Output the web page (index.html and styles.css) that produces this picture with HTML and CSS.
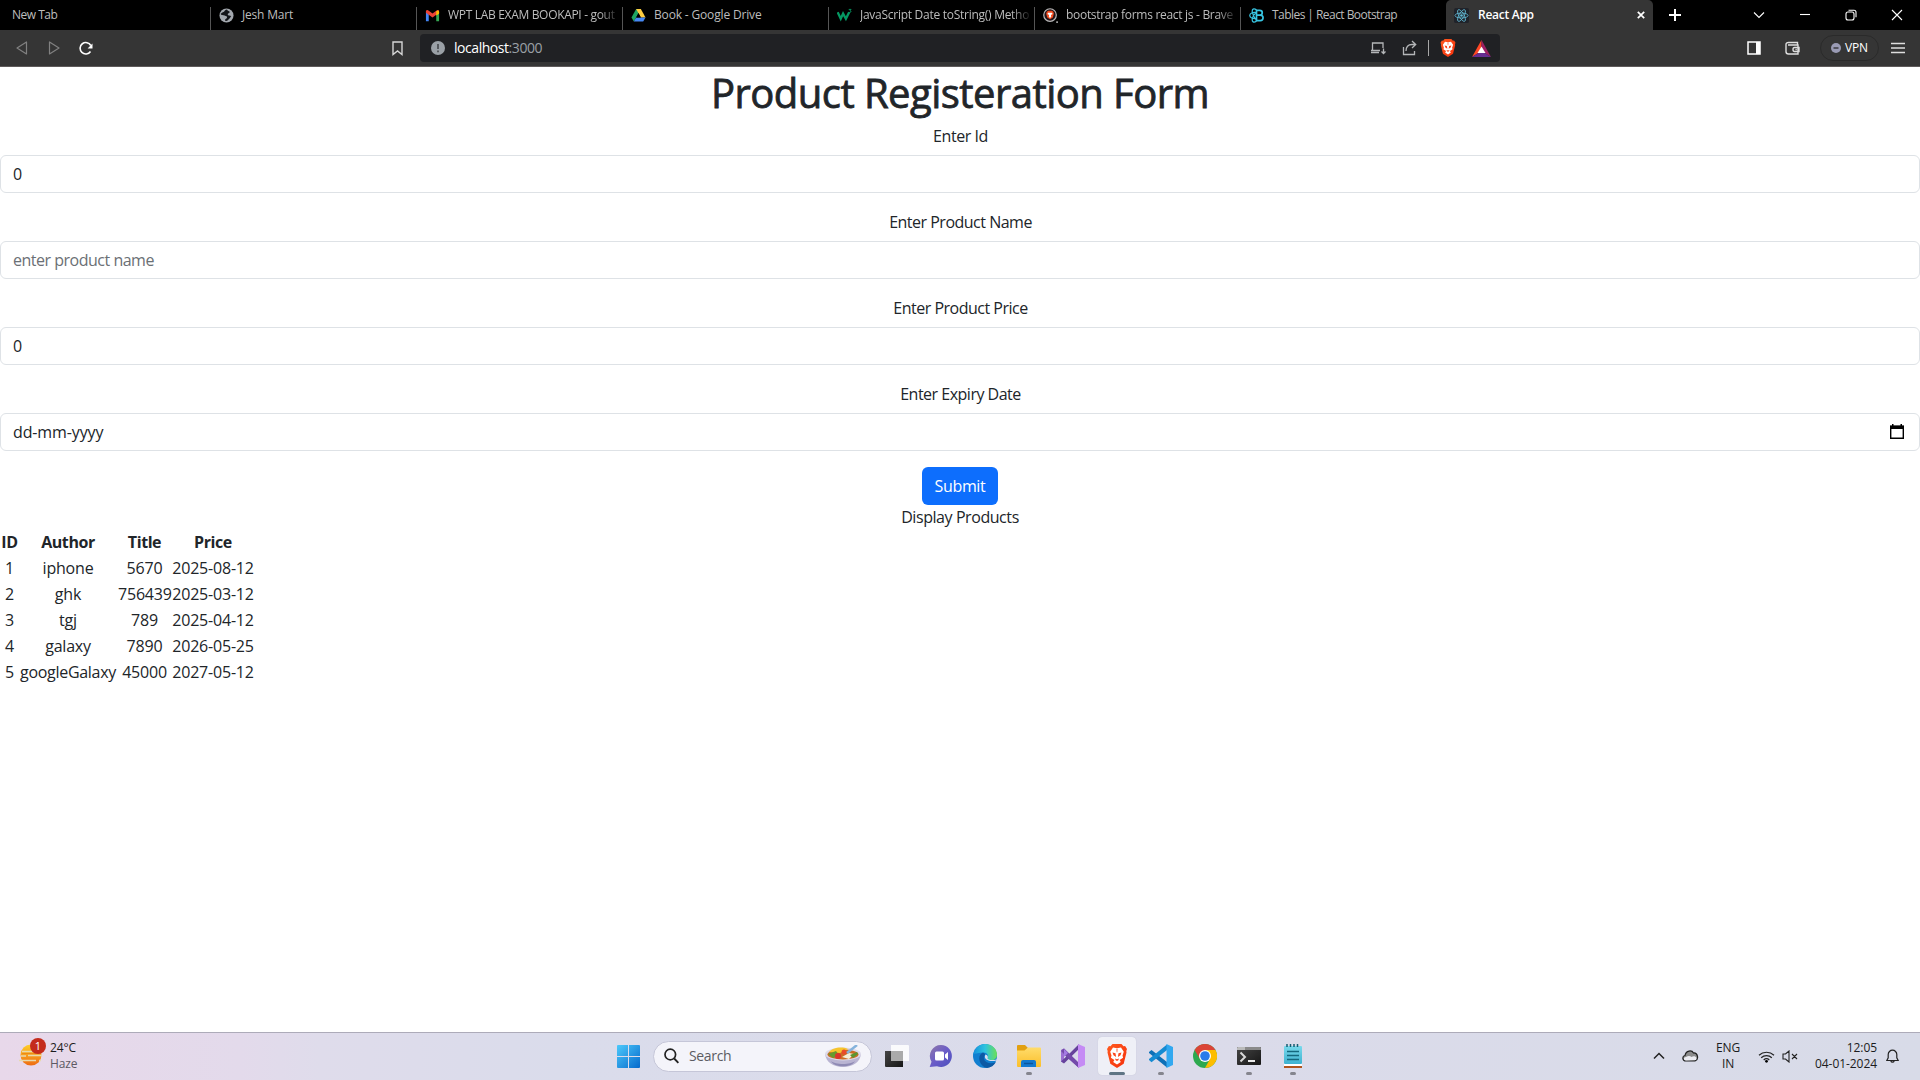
FILE: index.html
```html
<!DOCTYPE html>
<html lang="en">
<head>
<meta charset="utf-8">
<title>React App</title>
<link rel="stylesheet" href="styles.css">
</head>
<body>
<svg class="defs" width="0" height="0">
  <defs>
    <linearGradient id="lion" x1="0" x2="1" y1="0" y2="1"><stop offset="0" stop-color="#ff5a1f"/><stop offset="1" stop-color="#f5300c"/></linearGradient>
    <linearGradient id="win" x1="0" x2="1" y1="0" y2="1"><stop offset="0" stop-color="#4cc9fb"/><stop offset="1" stop-color="#0669cc"/></linearGradient>
    <linearGradient id="sun" x1="0" x2="0" y1="0" y2="1"><stop offset="0" stop-color="#ffcf2a"/><stop offset="1" stop-color="#ee6b12"/></linearGradient>
    <linearGradient id="chat" x1="0" x2="1" y1="0" y2="1"><stop offset="0" stop-color="#9079a8"/><stop offset=".5" stop-color="#6a5cc8"/><stop offset="1" stop-color="#4a4fbe"/></linearGradient>
    <linearGradient id="edgeTop" x1="0" x2="1"><stop offset="0" stop-color="#1592dc"/><stop offset=".5" stop-color="#2fc3df"/><stop offset="1" stop-color="#6be055"/></linearGradient>
    <linearGradient id="folder" x1="0" x2="0" y1="0" y2="1"><stop offset="0" stop-color="#ffdc6b"/><stop offset="1" stop-color="#fbbf2b"/></linearGradient>
    <linearGradient id="note" x1="0" x2="0" y1="0" y2="1"><stop offset="0" stop-color="#79d9ec"/><stop offset="1" stop-color="#3eb2d0"/></linearGradient>
    <linearGradient id="dark" x1="0" x2="1" y1="0" y2="1"><stop offset="0" stop-color="#454545"/><stop offset="1" stop-color="#161616"/></linearGradient>
    <symbol id="brave" viewBox="0 0 20 24">
      <path fill="url(#lion)" d="M5.500 0h9l2 2.200 1.600-.2L20 5l-.7 2 .2 1.500-2.800 11.200L10 24l-6.700-4.300L.5 8.500.7 7 0 5l1.900-3 1.600.2z"/>
      <path fill="#fff" d="M6 3.500l4 .8 4-.8 2.800 4.200-1.300 3.800.6 2.200-3.500 2.300 1.200 2L10 20.500 6.200 18l1.200-2-3.500-2.300.6-2.200L3.200 7.700z"/>
      <path fill="#fb4418" d="M5.500 8.500l3 .8.600 3.600-2.600-1.700zm9 0l-3 .8-.6 3.600 2.600-1.700zM9.500 4.800h1l-.2 3.500h-.6zM8 14.500l2 .8 2-.8-.7 1.700-1.300.8-1.300-.8z"/>
    </symbol>
  </defs>
</svg>

<div class="screen">
  <header class="browser">
    <div class="tabs">
      <div class="tab first"><span class="tab-title t-new">New Tab</span></div>
      <div class="tab">
        <svg class="fav" viewBox="0 0 16 16"><circle cx="8" cy="8" r="7.500" fill="#a3a8ae"/><path d="M8.500 1.500c-3 .3-2 2.500-4.500 3L1.800 6c.2 1.800 2.700 1.400 4.200 2.100 1.500.8 3 .6 2.500 2.300-.6 1.400-2.300 1-2 3.300 2.500.8 3.500-1.400 5-2.700l1.500-2.400c-1.300-1-3.500-.2-3.700-1.800-.2-1.300 2-1.200 2.200-2.600.1-1-2.500-1-3-2.700z" fill="#14161a"/></svg>
        <span class="tab-title t-jesh">Jesh Mart</span>
      </div>
      <div class="tab">
        <svg class="fav" viewBox="0 0 16 16"><path fill="#4285f4" d="M1 14V4l3 2v8z"/><path fill="#34a853" d="M15 14V4l-3 2v8z"/><path fill="#ea4335" d="M1 5V3c1-1.500 2-1 3-.2l4 3 4-3c1-.8 2-1.300 3 .2v2L8 10z"/><path fill="#fbbc04" d="M12 3.500c2-1.500 3-1 3 1V6l-3 2z"/></svg>
        <span class="tab-title fade t-wpt">WPT LAB EXAM BOOKAPI - gout</span>
      </div>
      <div class="tab">
        <svg class="fav" viewBox="0 0 16 16"><path fill="#1fa463" d="M5.500 1h5L3 14.500.5 10z"/><path fill="#ffcd40" d="M5.500 1h5l5 9h-5z"/><path fill="#4688f4" d="M3 14.500L5.500 10h10L13 14.500z"/><path d="M8 5.300L10.500 10h-5z"/></svg>
        <span class="tab-title t-book">Book - Google Drive</span>
      </div>
      <div class="tab">
        <svg class="fav" viewBox="0 0 16 16"><path fill="none" stroke="#059862" stroke-width="2.500" d="M.7 4.500L4 11.500 6.500 6l3 5.500L13 4.500"/><path fill="none" stroke="#059862" d="M12.500 1.500H15L13.800 3c1.500 0 1.500 2-.9 1.800"/></svg>
        <span class="tab-title fade">JavaScript Date toString() Metho</span>
      </div>
      <div class="tab">
        <svg class="fav" viewBox="0 0 16 16"><circle cx="7.500" cy="7.500" r="6.700" fill="#22151a" stroke="#b8b8b8" stroke-width="1.300"/><path fill="#f44a1d" d="M4 4l1.500-1h4L11 4l.6 2-1.100 4-3 2-3-2-1.100-4z"/><path fill="#fff" d="M5.500 5h4l.8 1.500-1.800 1 .3 2-1.300 1-1.300-1 .3-2-1.800-1z"/><circle cx="15" cy="15" r="1" fill="#ccc"/></svg>
        <span class="tab-title fade t-forms">bootstrap forms react js - Brave</span>
      </div>
      <div class="tab last">
        <svg class="fav" viewBox="0 0 16 16" fill="none" stroke="#38c5e2"><path stroke-width="1.800" d="M8 2.500h3.500c3.500 0 3.500 5 0 5H8zm0 5h4c4 0 4 6 0 6H8z"/><path stroke-width="1.300" d="M8 5C4 4 .8 6 .8 8S4 12 8 11M8 2C5 0 3 1 3.500 4.500c.5 3 2 6 4.500 8.500M8 14c-3 2-5 1-4.500-2.500C4 9 6 6 8 4.500"/></svg>
        <span class="tab-title t-tables">Tables | React Bootstrap</span>
      </div>
      <div class="tab active">
        <svg class="fav" viewBox="0 0 16 16"><rect width="16" height="16" rx="2" fill="#20232a"/><g fill="none" stroke="#61b8d2" stroke-width=".9"><ellipse cx="8" cy="8" rx="7" ry="2.700"/><ellipse cx="8" cy="8" rx="7" ry="2.700" transform="rotate(60 8 8)"/><ellipse cx="8" cy="8" rx="7" ry="2.700" transform="rotate(120 8 8)"/></g><circle cx="8" cy="8" r="1.400" fill="#61b8d2"/></svg>
        <span class="tab-title">React App</span>
        <svg class="close" viewBox="0 0 8 8"><path d="M.8.8l6.400 6.400M7.200.8L.8 7.200" stroke="#fff" stroke-width="1.700"/></svg>
      </div>
      <svg class="plus" viewBox="0 0 12 12"><path d="M6 0v12M0 6h12" stroke="#fff" stroke-width="2"/></svg>
      <div class="window-buttons">
        <svg width="12" height="12" viewBox="0 0 12 12"><path d="M1 3.500l5 5 5-5"/></svg>
        <svg width="12" height="12" viewBox="0 0 12 12"><path d="M1 5.500h10"/></svg>
        <svg width="12" height="12" viewBox="0 0 12 12"><rect x="1" y="3" width="8" height="8" rx="2"/><path d="M3.500 1.200H9q2 0 2 2v5"/></svg>
        <svg width="12" height="12" viewBox="0 0 12 12"><path d="M1 1l10 10M11 1L1 11"/></svg>
      </div>
    </div>

    <div class="toolbar">
      <div class="nav">
        <svg width="12" height="14" viewBox="0 0 12 14"><path d="M10.500 1v12L1 7z" fill="none" stroke="#818181" stroke-width="1.200" stroke-linejoin="round"/></svg>
        <svg width="12" height="14" viewBox="0 0 12 14"><path d="M1.500 1v12L11 7z" fill="none" stroke="#818181" stroke-width="1.200" stroke-linejoin="round"/></svg>
        <svg width="14" height="14" viewBox="0 0 14 14"><path d="M11.500 10.500A5.700 5.700 0 1 1 11.800 4.500" fill="none" stroke="#fff" stroke-width="1.600"/><path d="M13.500 2.500V7.500H8.600z" fill="#fff"/></svg>
      </div>
      <svg class="bookmark" viewBox="0 0 11 15"><path d="M1 1h9v12.500L5.500 10 1 13.500z" fill="none" stroke="#d6d6d6" stroke-width="1.400"/></svg>
      <div class="address">
        <svg class="site" viewBox="0 0 14 14"><circle cx="7" cy="7" r="7" fill="#9aa0a6"/><path d="M7 3v5M7 9.500v1.700" stroke="#44474b" stroke-width="1.600"/></svg>
        <span class="url">localhost<span class="port">:3000</span></span>
        <div class="address-icons">
          <svg width="16" height="14" viewBox="0 0 16 14" fill="none" stroke="#b4b6b8" stroke-width="1.300"><path d="M2.500 9V2h10.500v5M1 11.500h8M1 9.500h9M13.500 7.500v5M11.500 10.500l2 2 2-2"/></svg>
          <svg width="15" height="16" viewBox="0 0 15 16" fill="none" stroke="#b4b6b8" stroke-width="1.300"><path d="M1.500 7v7.500h11V11M4 11c0-4 2-6.500 6-6.500h3.500M10 1l3.700 3.500L10 8"/></svg>
          <span class="bar"></span>
          <svg class="shield" width="16" height="18"><use href="#brave"/></svg>
          <svg width="19" height="17" viewBox="0 0 19 17"><path fill="#ff4724" d="M9.500 0L0 17l9.500-6z"/><path fill="#9e1f63" d="M9.500 0L19 17 9.500 11z"/><path fill="#662d91" d="M0 17h19l-9.500-6z"/><path fill="#fff" d="M9.500 6.500l4 6.500h-8z"/></svg>
        </div>
      </div>
      <div class="tools">
        <svg width="14" height="14" viewBox="0 0 14 14"><path d="M1 1h12v12H1z" fill="none" stroke="#fff" stroke-width="1.500"/><path d="M9 1h4v12H9z" fill="#fff"/></svg>
        <svg width="15" height="14" viewBox="0 0 15 14" fill="none" stroke="#dedede" stroke-width="1.400"><path d="M12.500 4V1.500h-9Q1 1.500 1 3.500v7Q1 13 3.500 13h9.500V4H3M14 6.500H9.500Q8 6.500 8 8.500t1.500 2H14z"/><path d="M10.500 8.500h1.300"/></svg>
        <div class="vpn"><svg width="10" height="10" viewBox="0 0 10 10"><circle cx="5" cy="5" r="5" fill="#9a9bb4"/><path d="M2.500 5h5" stroke="#3a3a3f" stroke-width="1.500"/></svg>VPN</div>
        <svg width="14" height="12" viewBox="0 0 14 12"><path d="M0 1.500h14M0 6h14M0 10.500h14" stroke="#dedede" stroke-width="1.300"/></svg>
      </div>
    </div>
  </header>

  <main class="page">
    <h1>Product Registeration Form</h1>
    <div class="group"><label>Enter Id</label><div class="control">0</div></div>
    <div class="group"><label class="l-name">Enter Product Name</label><div class="control placeholder">enter product name</div></div>
    <div class="group"><label class="l-name">Enter Product Price</label><div class="control">0</div></div>
    <div class="group"><label class="l-date">Enter Expiry Date</label>
      <div class="control date"><span>dd-mm-yyyy</span>
        <svg width="14" height="15" viewBox="0 0 14 15"><path d="M.7 2.500h12.600v11.700H.7z" fill="none" stroke="#000" stroke-width="1.400"/><path d="M0 1.500h14V5H0zM2 0h1.500v2H2zM10.500 0H12v2h-1.500z"/></svg>
      </div>
    </div>
    <button class="submit" type="button">Submit</button>
    <div class="caption">Display Products</div>
    <table>
      <colgroup><col class="c-id"><col class="c-author"><col class="c-title"><col class="c-price"></colgroup>
      <thead><tr><th>ID</th><th>Author</th><th>Title</th><th>Price</th></tr></thead>
      <tbody>
        <tr><td>1</td><td>iphone</td><td>5670</td><td>2025-08-12</td></tr>
        <tr><td>2</td><td>ghk</td><td>756439</td><td>2025-03-12</td></tr>
        <tr><td>3</td><td>tgj</td><td>789</td><td>2025-04-12</td></tr>
        <tr><td>4</td><td>galaxy</td><td>7890</td><td>2026-05-25</td></tr>
        <tr><td>5</td><td class="wide">googleGalaxy</td><td>45000</td><td>2027-05-12</td></tr>
      </tbody>
    </table>
  </main>

  <footer class="taskbar">
    <div class="weather">
      <div class="weather-icon">
        <svg width="24" height="22" viewBox="0 0 24 22"><circle cx="12" cy="11" r="10.500" fill="url(#sun)"/><path d="M3 7.500h11M9 11.500h14M2 12h5M0 16.500h17M20 16.500h2" stroke="#e8d9ad" stroke-width="1.500"/><path d="M3 9.500h18" stroke="#ee8b13" stroke-width="1"/></svg>
        <span class="badge">1</span>
      </div>
      <div class="stack"><span>24°C</span><span class="muted">Haze</span></div>
    </div>

    <div class="apps">
      <svg class="start" width="23" height="23" viewBox="0 0 23 23"><path fill="url(#win)" d="M0 1q0-1 1-1h10v11H0zM12 0h10q1 0 1 1v10H12zM0 12h11v11H1q-1 0-1-1zM12 12h11v10q0 1-1 1H12z"/></svg>
      <div class="search">
        <svg width="15" height="16" viewBox="0 0 15 16"><circle cx="6.300" cy="6.500" r="5.300" fill="none" stroke="#222" stroke-width="1.700"/><path d="M10.200 10.500l4.200 4.400" stroke="#222" stroke-width="1.900"/></svg>
        <span>Search</span>
        <svg class="bowl" width="36" height="23" viewBox="0 0 36 23"><path d="M0 9c1 8 8 13 18 13S35 17 36 9z" fill="#b9b4d2"/><path d="M6 16c4 4 20 4 24 0-3 7-21 7-24 0z" fill="#8e8ab4"/><ellipse cx="18" cy="9" rx="18" ry="6.500" fill="#dddbea"/><ellipse cx="18" cy="9.500" rx="15.500" ry="5" fill="#cc6d25"/><path d="M4 7c3-4 12-6 19-3l-8 4z" fill="#f7c52e"/><path d="M3 9l8-3 3 4-6 3z" fill="#679b2d"/><circle cx="13" cy="11" r="3" fill="#dc352b"/><circle cx="19" cy="7" r="2.500" fill="#e94c2a"/><path d="M17 12l7-4 5 1-5 5z" fill="#f6efd8"/><path d="M25 10l7-3 1 2-5 4z" fill="#5c9632"/><path d="M22 8L32 0" stroke="#85b3dc" stroke-width="2.500"/></svg>
      </div>
      <div class="app view"><svg width="24" height="22" viewBox="0 0 24 22"><path fill="url(#dark)" d="M0 6h18v16H1q-1 0-1-1z"/><path fill="#fff" fill-opacity=".85" d="M6 0h17q1 0 1 1v15H6z"/><path fill="#aaa" d="M6 6h12v10H6z"/></svg></div>
      <div class="app"><svg width="24" height="24" viewBox="0 0 24 24"><path fill="url(#chat)" d="M12 1a11 11 0 1 1-4 21.300L.7 23l1.800-5.300A11 11 0 0 1 12 1z"/><rect x="6" y="7.500" width="9" height="9" rx="1.500" fill="#fff"/><path fill="#fff" d="M16 10.500l3-2.500v8l-3-2.500z"/></svg></div>
      <div class="app"><svg width="24" height="24" viewBox="0 0 24 24"><circle cx="12" cy="12" r="12" fill="#117fd0"/><path fill="url(#edgeTop)" d="M.3 10C2 3.500 6.500 0 12 0c7 0 12 5 12 10.500 0 4-3 6-6.500 6-3 0-4-1.200-3-2.500 1.500-2 0-5.500-4-5.500C6 8.500 2 10 .3 10z"/><path fill="#0c59a4" d="M9 9c-5 3-3 13 5 15 4-.5 7-2.500 9-6-5 2.500-11 1-12-3-.5-2 .2-3.500 1.200-4.500C11.500 9 10 8.500 9 9z"/><path fill="#dbe0ef" d="M12.500 10.500c-1 2-1 4 1.300 5.300 2.700 1.500 6.500 1.600 9.500.6 0 0 1-.8.200-1-5 1.500-9.700.3-8.900-1.500.6-1.200.1-2.800-2.100-3.400z"/></svg></div>
      <div class="app open"><svg width="24" height="24" viewBox="0 0 24 24"><path fill="#e2a011" d="M0 2q0-1 1-1h7l3 3-3 4H0z"/><path fill="url(#folder)" d="M0 6.500h7.500L11 3.500h12q1 0 1 1V22q0 1-1 1H1q-1 0-1-1z"/><path fill="#1479cf" d="M4 23v-5q0-2 2-2h11q2 0 2 2v5z"/><path d="M7 19.500h9" stroke="#0c559c" stroke-width="1.500"/></svg></div>
      <div class="app"><svg width="24" height="24" viewBox="0 0 24 24"><path fill="#7b51b0" d="M0 6l3-1.500L17.500 19 18 24 0 8z"/><path fill="#9c6fd3" d="M0 6.500L3 5v14l-3-1.500z"/><path fill="#66439c" d="M3 19.500L18 5V0L8 10 0 17.500z"/><path fill="#744aaa" d="M3 4.500L18 19v5L8 15 0 7z"/><path fill="#c58bf5" d="M17 0l7 3v18l-7 3z"/><path fill="#a47be4" d="M3 5l4 4-4 4z"/></svg></div>
      <div class="app current"><svg width="20" height="24"><use href="#brave"/></svg></div>
      <div class="app open"><svg width="24" height="24" viewBox="0 0 24 24"><path fill="#0e70b7" d="M0 8l2.500-2L18 18v5.500L0 9z"/><path fill="#168bd2" d="M0 16l2.500 2.200L18 6V.5L0 15z"/><path fill="#32a8f0" d="M17.500 0L24 3v18l-6.500 3z"/></svg></div>
      <div class="app"><svg width="24" height="24" viewBox="0 0 24 24"><circle cx="12" cy="12" r="12" fill="#2da94f"/><path fill="#db4437" d="M1.600 6A12 12 0 0 1 22.400 6H12L7 15z"/><path fill="#fdbd00" d="M22.400 6A12 12 0 0 1 12 24l5-9-5-9z"/><circle cx="12" cy="12" r="6" fill="#fff"/><circle cx="12" cy="12" r="4.800" fill="#2a7bea"/></svg></div>
      <div class="app open"><svg width="24" height="20" viewBox="0 0 24 20"><rect y="1" width="24" height="18" rx="1" fill="url(#dark)"/><path fill="#8a8a8a" d="M0 4V2q0-1 1-1h22q1 0 1 1v2z"/><path fill="#bbb" d="M1 1h7v3H0V2z"/><path d="M3.500 6.500L8 11l-4.500 4.500" fill="none" stroke="#d8d8d8" stroke-width="2"/><path d="M11 15h7" stroke="#fff" stroke-width="1.800"/></svg></div>
      <div class="app open"><svg width="18" height="24" viewBox="0 0 18 24"><path fill="#fff" d="M0 19h18v3H0z"/><path fill="#b1551d" d="M0 22h18v2H0z"/><rect y="2" width="18" height="18" rx="1" fill="url(#note)"/><path d="M3 0v3M6.500 0v3M10 0v3M13.500 0v3" stroke="#155e72" stroke-width="1.500"/><path d="M3 7.500h12M3 11.500h12M3 15.500h12" stroke="#14687e" stroke-width="1.500"/></svg></div>
    </div>

    <div class="tray">
      <svg width="12" height="8" viewBox="0 0 12 8"><path d="M1 6.500l5-5 5 5" fill="none" stroke="#222" stroke-width="1.500"/></svg>
      <svg class="cloud" width="17" height="12" viewBox="0 0 17 12"><path fill="#8c8c8c" stroke="#222" stroke-width="1.200" d="M4 11C0 11 0 6 3 5.500 4 0 10 0 11.500 3c4-.5 6 6 1.500 8z"/><path fill="#ececf2" d="M4 10.500C1.500 10.500 1 7 4 7c2-1.500 4-1.500 5.500 0C12 5 16 7 14 10z"/></svg>
      <div class="stack lang"><span>ENG</span><span>IN</span></div>
      <svg class="wifi" width="17" height="13" viewBox="0 0 17 13"><g fill="none" stroke="#222" stroke-width="1.200"><path d="M1 5.200a11 11 0 0 1 15 0M3.200 7.700a7.600 7.600 0 0 1 10.600 0M5.700 10a4.200 4.200 0 0 1 5.600 0"/></g><circle cx="8.500" cy="11.300" r="1.400"/></svg>
      <svg class="volume" width="16" height="13" viewBox="0 0 16 13"><path d="M1 4h2.500L7 1v11L3.500 9H1zM10 4l5 5M15 4l-5 5" fill="none" stroke="#222" stroke-width="1.100"/></svg>
      <div class="stack clock"><span>12:05</span><span>04-01-2024</span></div>
      <svg class="bell" width="13" height="15" viewBox="0 0 13 15"><path d="M.8 11.500l1.400-2.700V5.500a4.300 4.300 0 0 1 8.600 0v3.300l1.400 2.700zM4.800 12a1.800 1.800 0 0 0 3.400 0" fill="none" stroke="#222" stroke-width="1.200"/></svg>
    </div>
  </footer>
</div>
</body>
</html>
```
FILE: styles.css
```css
* { box-sizing: border-box; }

body {
  margin: 0;
  font-family: "Open Sans", "Noto Sans", sans-serif;
  font-size: 16px;
  line-height: 24px;
  color: #212529;
  background: #fff;
}

svg { flex: none; display: block; }
.defs { position: absolute; }

.screen {
  display: flex;
  flex-direction: column;
  width: 1920px;
  height: 1080px;
  overflow: hidden;
}

/* Browser chrome */
.tabs {
  display: flex;
  align-items: center;
  height: 30px;
  background: #000;
  font-size: 12px;
  letter-spacing: -0.27px;
  color: #bdbdbd;
}

.tab {
  display: flex;
  align-items: center;
  width: 206px;
  height: 30px;
  padding-left: 8px;
  gap: 8px;
  background: linear-gradient(#555, #555) right bottom / 1px 23px no-repeat;
}

.tab.first { width: 211px; padding-left: 12px; }
.tab.last { width: 205px; background: none; }

.tab.active {
  width: 207px;
  padding: 0 8px;
  gap: 9px;
  background: #353535;
  border-radius: 5px 5px 0 0;
  color: #fff;
  font-weight: 600;
}

.fav { width: 15px; height: 15px; }
.tab-title { white-space: nowrap; line-height: 18px; }
.tab-title.fade {
  flex: 1;
  margin-right: 3px;
  -webkit-mask-image: linear-gradient(to right, #000 88%, transparent);
  mask-image: linear-gradient(to right, #000 88%, transparent);
}
.t-new { letter-spacing: -0.5px; }
.t-jesh { letter-spacing: -0.2px; }
.t-wpt { letter-spacing: -0.32px; }
.t-book { letter-spacing: -0.16px; }
.t-tables { letter-spacing: -0.55px; }
.t-forms { letter-spacing: -0.3px; }

.close { width: 8px; height: 8px; margin-left: auto; }
.plus { width: 12px; height: 12px; margin-left: 16px; }

.window-buttons {
  display: flex;
  gap: 34px;
  margin-left: auto;
  padding-right: 17px;
}
.window-buttons svg { fill: none; stroke: #fff; stroke-width: 1.1; }

.toolbar {
  display: flex;
  align-items: center;
  height: 37px;
  background: #353535;
  border-bottom: 1px solid #5e5a5a;
}

.nav { display: flex; gap: 20px; width: 392px; padding-left: 16px; }
.nav svg:last-child { margin-left: -1px; }
.bookmark { width: 11px; height: 15px; }

.address {
  display: flex;
  align-items: center;
  width: 1080px;
  height: 28px;
  margin-left: 17px;
  padding: 0 9px 0 11px;
  background: #202124;
  border-radius: 4px;
}
.site { width: 14px; height: 14px; }
.url { margin-left: 9px; font-size: 14px; letter-spacing: -0.45px; color: #fff; }
.port { color: #9aa0a6; }

.address-icons { display: flex; align-items: center; margin-left: auto; }
.address-icons svg + svg { margin-left: 16px; }
.bar { width: 1px; height: 16px; margin-left: 11px; background: #a8a8a8; }
.address-icons .shield { margin-left: 11px; }

.tools { display: flex; align-items: center; margin-left: auto; padding-right: 15px; }
.tools > svg + svg { margin-left: 24px; }
.vpn {
  display: flex;
  align-items: center;
  gap: 4px;
  height: 26px;
  margin: 0 12px 0 20px;
  padding: 0 10px;
  border: 1px solid #2a2a2a;
  border-radius: 13px;
  font-size: 12px;
  letter-spacing: -0.14px;
  color: #fff;
}

/* Page */
.page { flex: 1; text-align: center; letter-spacing: -0.43px; }

h1 {
  margin: 0 0 8px;
  padding-top: 3px;
  font-size: 40px;
  line-height: 45px;
  font-weight: 500;
  letter-spacing: -0.54px;
  -webkit-text-stroke: 0.8px #212529;
}

.group { margin-bottom: 16px; }
label { display: block; padding: 1px 0 0 1px; margin-bottom: 7px; }
.l-name { letter-spacing: -0.5px; }
.l-date { letter-spacing: -0.5px; }

.control {
  height: 38px;
  padding: 6px 12px;
  border: 1px solid #dee2e6;
  border-radius: 6px;
  text-align: left;
}
.placeholder { color: #6b7075; letter-spacing: -0.49px; }
.date { display: flex; justify-content: space-between; letter-spacing: -0.12px; }
.date svg { margin: 4px 3px 0 0; }

.submit {
  display: block;
  width: 76px;
  height: 38px;
  margin: 0 auto;
  padding: 0;
  border: 0;
  border-radius: 6px;
  background: #0d6efd;
  color: #fff;
  font: inherit;
  letter-spacing: -0.36px;
}

table { table-layout: fixed; width: 255px; border-collapse: collapse; letter-spacing: -0.2px; }
th, td { padding: 1px 0 1px 1px; white-space: nowrap; text-align: center; }
td:last-child, th:last-child { padding-left: 0; }
th { font-weight: 700; letter-spacing: -0.42px; }
.wide { letter-spacing: -0.3px; }
.c-id { width: 18px; }
.c-author { width: 99px; }
.c-title { width: 54px; }
.c-price { width: 84px; }

/* Taskbar */
.taskbar {
  display: grid;
  grid-template-columns: 617px 1fr auto;
  align-items: center;
  height: 48px;
  border-top: 1px solid #adabb9;
  background: linear-gradient(90deg, #e8d8ea 0, #e3daeb 240px, #dfdceb 320px, #dadceb 560px, #dbdbea 1200px, #d8dbe8 1920px);
}

.stack { display: flex; flex-direction: column; font-size: 12px; line-height: 16px; letter-spacing: -0.1px; color: #1c1c20; }
.muted { color: #5d5963; }

.weather { display: flex; gap: 7px; padding-left: 19px; margin-top: -1px; }
.weather-icon { position: relative; width: 24px; padding-top: 4px; }
.badge {
  position: absolute;
  top: -2px;
  left: 11px;
  width: 16px;
  height: 16px;
  border-radius: 50%;
  background: #c42b1c;
  color: #fff;
  font-size: 11px;
  line-height: 16px;
  text-align: center;
}

.apps { display: flex; align-items: center; height: 47px; }

.search {
  display: flex;
  align-items: center;
  width: 219px;
  height: 31px;
  margin: -1px 3px 0 13px;
  padding: 0 10px 0 10px;
  border: 1px solid #c5c6d8;
  border-radius: 16px;
  background: #f4f4fa;
  font-size: 14px;
  letter-spacing: -0.35px;
  color: #5c5c62;
}
.search span { margin-left: 10px; }
.bowl { margin-left: auto; }

.app {
  position: relative;
  display: flex;
  align-items: center;
  justify-content: center;
  width: 44px;
  height: 47px;
  padding-bottom: 1px;
}
.app.current::before {
  content: "";
  position: absolute;
  inset: 4px 3px 5px;
  border-radius: 4px;
  background: #eff0f7;
  box-shadow: 0 0 1px #b8b9c8;
}
.app.current svg { position: relative; }
.app.open::after, .app.current::after {
  content: "";
  position: absolute;
  bottom: 5px;
  left: 19px;
  width: 6px;
  height: 3px;
  border-radius: 2px;
  background: #85858e;
}
.app.current::after { left: 14px; width: 16px; background: #5f7585; }

.tray { display: flex; align-items: center; padding-right: 21px; margin-top: -1px; }
.cloud { margin-left: 17px; }
.lang { width: 26px; margin-left: 16px; align-items: center; }
.wifi { margin-left: 17px; }
.volume { margin-left: 7px; }
.clock { margin-left: 17px; align-items: flex-end; letter-spacing: -0.06px; }
.bell { margin-left: 9px; }
```
